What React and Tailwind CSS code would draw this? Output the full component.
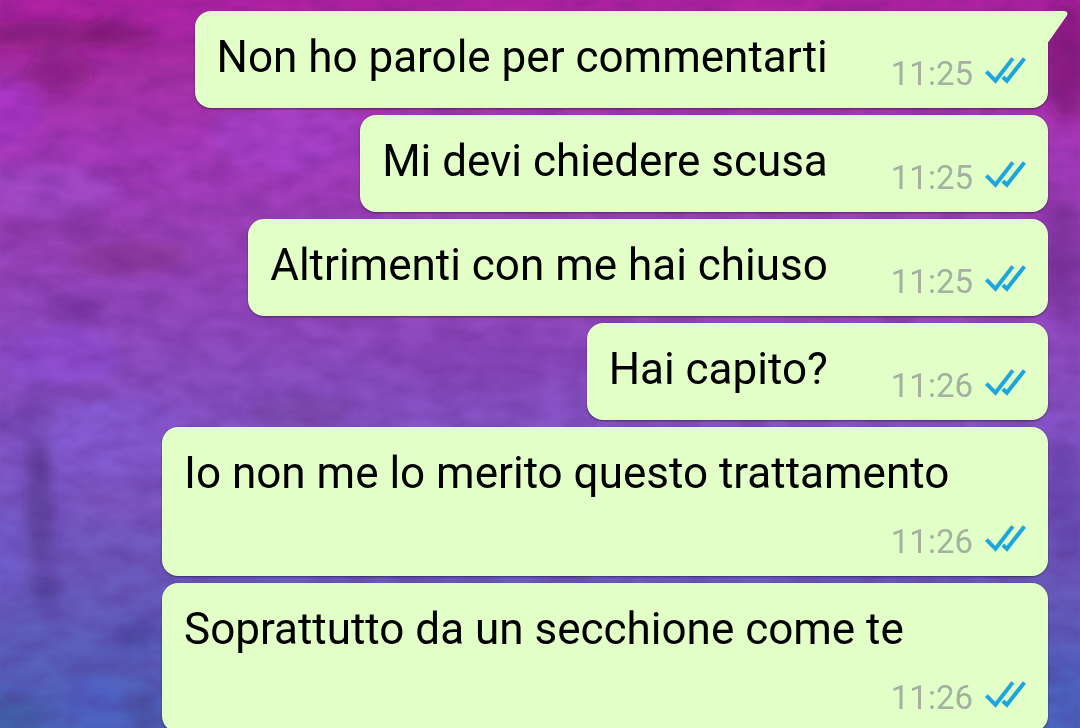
import React from 'react';

const messages = [
  { id: 1, text: 'Non ho parole per commentarti', time: '11:25' },
  { id: 2, text: 'Mi devi chiedere scusa', time: '11:25' },
  { id: 3, text: 'Altrimenti con me hai chiuso', time: '11:25' },
  { id: 4, text: 'Hai capito?', time: '11:26' },
  { id: 5, text: 'Io non me lo merito questo trattamento', time: '11:26' },
  { id: 6, text: 'Soprattutto da un secchione come te', time: '11:26' },
];

// Blurred patches of the wallpaper: x, y, rx, ry, colour, opacity
const patches = [
  [30, 35, 90, 14, '#74145f', 0.45],
  [120, 32, 36, 16, '#6c0f5e', 0.45],
  [60, 72, 34, 18, '#7d1773', 0.5],
  [5, 110, 36, 32, '#ad37d0', 0.7],
  [200, 15, 90, 14, '#b828b0', 0.6],
  [290, 135, 80, 40, '#a743cd', 0.7],
  [45, 190, 70, 25, '#a24fcd', 0.6],
  [120, 172, 34, 6, '#812898', 0.4],
  [60, 225, 60, 10, '#80309b', 0.5],
  [130, 255, 60, 16, '#853285', 0.5],
  [75, 305, 34, 10, '#732e97', 0.6],
  [60, 355, 60, 30, '#914fd8', 0.6],
  [300, 410, 50, 16, '#703f98', 0.5],
  [480, 360, 90, 30, '#8240ae', 0.4],
  [110, 430, 70, 35, '#8860dc', 0.6],
  [5, 420, 25, 10, '#59389c', 0.4],
  [38, 430, 14, 60, '#5c3b94', 0.3],
  [40, 500, 14, 60, '#4c3382', 0.5],
  [44, 586, 14, 10, '#352d7c', 0.5],
  [5, 560, 20, 40, '#7160d5', 0.6],
  [120, 500, 45, 16, '#8659c6', 0.5],
  [135, 632, 20, 10, '#3d3c91', 0.6],
  [10, 712, 34, 20, '#33588f', 0.4],
  [95, 700, 30, 25, '#4d62ca', 0.6],
  [142, 705, 16, 20, '#3e4c96', 0.4],
  [1066, 60, 24, 60, '#78136f', 0.6],
  [1066, 260, 20, 60, '#6b2a8b', 0.5],
  [1066, 500, 20, 60, '#553a94', 0.4],
  [1066, 690, 20, 40, '#4565c2', 0.4],
];

const Wallpaper = () => (
  <svg
    className="absolute inset-0 h-full w-full"
    viewBox="0 0 1080 728"
    preserveAspectRatio="none"
    aria-hidden="true"
  >
    <defs>
      <linearGradient id="base" x1="0" y1="0" x2="0" y2="1">
        <stop offset="0" stopColor="#b022a2" />
        <stop offset="0.1" stopColor="#a830a6" />
        <stop offset="0.2" stopColor="#a83abb" />
        <stop offset="0.35" stopColor="#9944ba" />
        <stop offset="0.5" stopColor="#8c4ec2" />
        <stop offset="0.65" stopColor="#7f59ca" />
        <stop offset="0.78" stopColor="#6c5abd" />
        <stop offset="0.9" stopColor="#5960be" />
        <stop offset="1" stopColor="#4c66bc" />
      </linearGradient>
      <filter id="soft" x="-50%" y="-50%" width="200%" height="200%">
        <feGaussianBlur stdDeviation="7" />
      </filter>
      <filter id="weave" x="0" y="0" width="100%" height="100%" colorInterpolationFilters="sRGB">
        <feTurbulence type="fractalNoise" baseFrequency="0.03 0.055" numOctaves="3" seed="11" />
        <feColorMatrix values="0 0 0 0 0.3  0 0 0 0 0.08  0 0 0 0 0.42  2 0 0 0 -0.65" />
        <feGaussianBlur stdDeviation="1.2" />
      </filter>
    </defs>
    <rect width="1080" height="728" fill="url(#base)" />
    <g filter="url(#soft)">
      {patches.map(([x, y, rx, ry, color, opacity]) => (
        <ellipse key={`${x}-${y}`} cx={x} cy={y} rx={rx} ry={ry} fill={color} opacity={opacity} />
      ))}
    </g>
    <rect width="1080" height="728" filter="url(#weave)" opacity="0.22" />
  </svg>
);

const ReadTicks = () => (
  <svg
    className="h-[30px] w-[41px]"
    viewBox="0 0 41 30"
    fill="none"
    stroke="#1ca6dc"
    strokeWidth="4"
    role="img"
    aria-label="Letto"
  >
    <path d="M1.4 14.6 L10.5 23.8 L27.8 1.4" />
    <path d="M17.8 20 L21.9 23.8 L39.4 1.4" />
  </svg>
);

const Tail = () => (
  <svg
    className="absolute top-0 left-full -ml-px h-8 w-[21px]"
    viewBox="0 0 21 32"
    fill="#e1ffc7"
    aria-hidden="true"
  >
    <path d="M0 0 H17.5 Q22 0.6 19.6 5 L1 31.5 H0 Z" />
  </svg>
);

const Message = ({ text, time, first }) => (
  <li
    className={`relative flex max-w-[886px] flex-wrap justify-end gap-x-[63px] bg-[#e1ffc7] px-[22px] pt-6 pb-[21px] shadow-[0_1px_2px_rgba(0,0,0,0.45)] ${
      first ? 'rounded-2xl rounded-tr-none' : 'rounded-2xl'
    }`}
  >
    <p className="mr-auto pb-2 text-[44px] leading-[44px] text-black">{text}</p>
    <div className="flex h-[52px] items-end gap-3">
      <time className="text-[33px] leading-[26px] text-[#a6b0a2]">{time}</time>
      <ReadTicks />
    </div>
    {first && <Tail />}
  </li>
);

const App = () => {
  return (
    <main className="relative min-h-screen overflow-hidden font-['Roboto',sans-serif]">
      <Wallpaper />
      <ul className="relative flex flex-col items-end gap-[7px] pt-[11px] pr-8 pl-8">
        {messages.map((message, index) => (
          <Message
            key={message.id}
            text={message.text}
            time={message.time}
            first={index === 0}
          />
        ))}
      </ul>
    </main>
  );
};

export default App;
